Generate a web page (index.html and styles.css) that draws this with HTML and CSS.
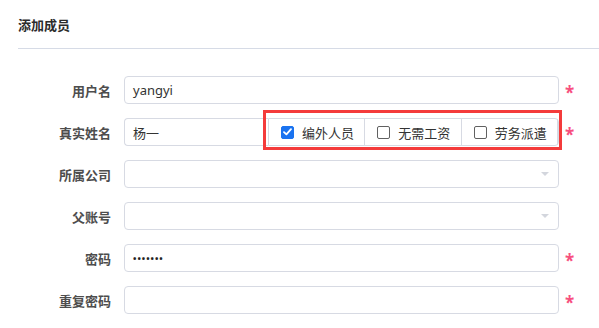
FILE: index.html
```html
<!DOCTYPE html>
<html>

<head>
    <title>添加成员</title>
    <link rel="stylesheet" href="styles.css">
</head>

<body>
    <div class="page">
        <div class="header">
            <h1 class="title">添加成员</h1>
        </div>

        <div class="form">
            <div class="row">
                <label class="label">用户名</label>
                <div class="field">
                    <div class="control">yangyi</div>
                </div>
                <span class="required">*</span>
            </div>

            <div class="row">
                <label class="label">真实姓名</label>
                <div class="field">
                    <div class="control joined">杨一</div>
                    <div class="options">
                        <div class="option">
                            <span class="box checked">
                                <svg width="9" height="8" viewBox="0 0 9 8">
                                    <path d="M1 4.2 L3.4 6.4 L8 1.2" fill="none" stroke="#fff" stroke-width="1.8" stroke-linecap="round" stroke-linejoin="round"/>
                                </svg>
                            </span>
                            <span>编外人员</span>
                        </div>
                        <div class="option">
                            <span class="box"></span>
                            <span>无需工资</span>
                        </div>
                        <div class="option">
                            <span class="box"></span>
                            <span>劳务派遣</span>
                        </div>
                        <div class="highlight"></div>
                    </div>
                </div>
                <span class="required">*</span>
            </div>

            <div class="row">
                <label class="label">所属公司</label>
                <div class="field">
                    <div class="control select"><span class="arrow"></span></div>
                </div>
                <span class="required"></span>
            </div>

            <div class="row">
                <label class="label">父账号</label>
                <div class="field">
                    <div class="control select"><span class="arrow"></span></div>
                </div>
                <span class="required"></span>
            </div>

            <div class="row">
                <label class="label">密码</label>
                <div class="field">
                    <div class="control"><span class="dots">•••••••</span></div>
                </div>
                <span class="required">*</span>
            </div>

            <div class="row">
                <label class="label">重复密码</label>
                <div class="field">
                    <div class="control"></div>
                </div>
                <span class="required">*</span>
            </div>
        </div>
    </div>
</body>
</html>
```

FILE: styles.css
```css
/* Add member form */
body {
    margin: 0;
    background-color: #ffffff;
    font-family: 'Noto Sans', 'Noto Sans CJK SC', sans-serif;
    color: #333333;
}

.page {
    padding-left: 18px;
}

.header {
    height: 48px;
    display: flex;
    align-items: center;
    border-bottom: 1px solid #d6dbe6;
}

.title {
    margin: 0;
    font-size: 13px;
    font-weight: bold;
    color: #2b2b2b;
}

.form {
    padding-top: 27px;
    display: flex;
    flex-direction: column;
    gap: 14px;
}

.row {
    display: flex;
    align-items: center;
    height: 28px;
}

.label {
    width: 93px;
    margin-right: 13px;
    text-align: right;
    font-size: 13px;
    font-weight: bold;
    color: #4d4d4d;
}

.field {
    width: 435px;
    height: 28px;
    display: flex;
}

.control {
    flex: 1;
    box-sizing: border-box;
    height: 28px;
    padding-left: 8px;
    border: 1px solid #d7dae3;
    border-radius: 4px;
    display: flex;
    align-items: center;
    font-size: 13px;
    color: #333333;
}

.control.joined {
    border-right: none;
    border-radius: 4px 0 0 4px;
}

.select {
    justify-content: flex-end;
    padding-right: 9px;
}

.arrow {
    width: 0;
    height: 0;
    border-left: 4px solid transparent;
    border-right: 4px solid transparent;
    border-top: 4px solid #d3d6dd;
}

.dots {
    font-size: 9px;
    font-weight: bold;
    letter-spacing: 1px;
    color: #222222;
}

.options {
    position: relative;
    display: flex;
    width: 291px;
    box-sizing: border-box;
    height: 28px;
    border: 1px solid #d7dae3;
    border-radius: 0 4px 4px 0;
}

.option {
    flex: 1;
    display: flex;
    align-items: center;
    gap: 8px;
    padding-left: 12px;
    font-size: 13px;
    color: #333333;
    border-right: 1px solid #d7dae3;
}

.option:last-of-type {
    border-right: none;
}

.box {
    box-sizing: border-box;
    width: 13px;
    height: 13px;
    border: 1px solid #616161;
    border-radius: 2px;
    display: flex;
    align-items: center;
    justify-content: center;
}

.box.checked {
    background-color: #1a73f0;
    border-color: #1a73f0;
}

.highlight {
    position: absolute;
    left: -6px;
    top: -9px;
    right: -4px;
    bottom: -5px;
    border: 3px solid #f43b3b;
    pointer-events: none;
}

.required {
    margin-left: 6px;
    font-size: 17px;
    font-weight: bold;
    color: #f7507e;
    line-height: 1;
    padding-top: 5px;
}
```
